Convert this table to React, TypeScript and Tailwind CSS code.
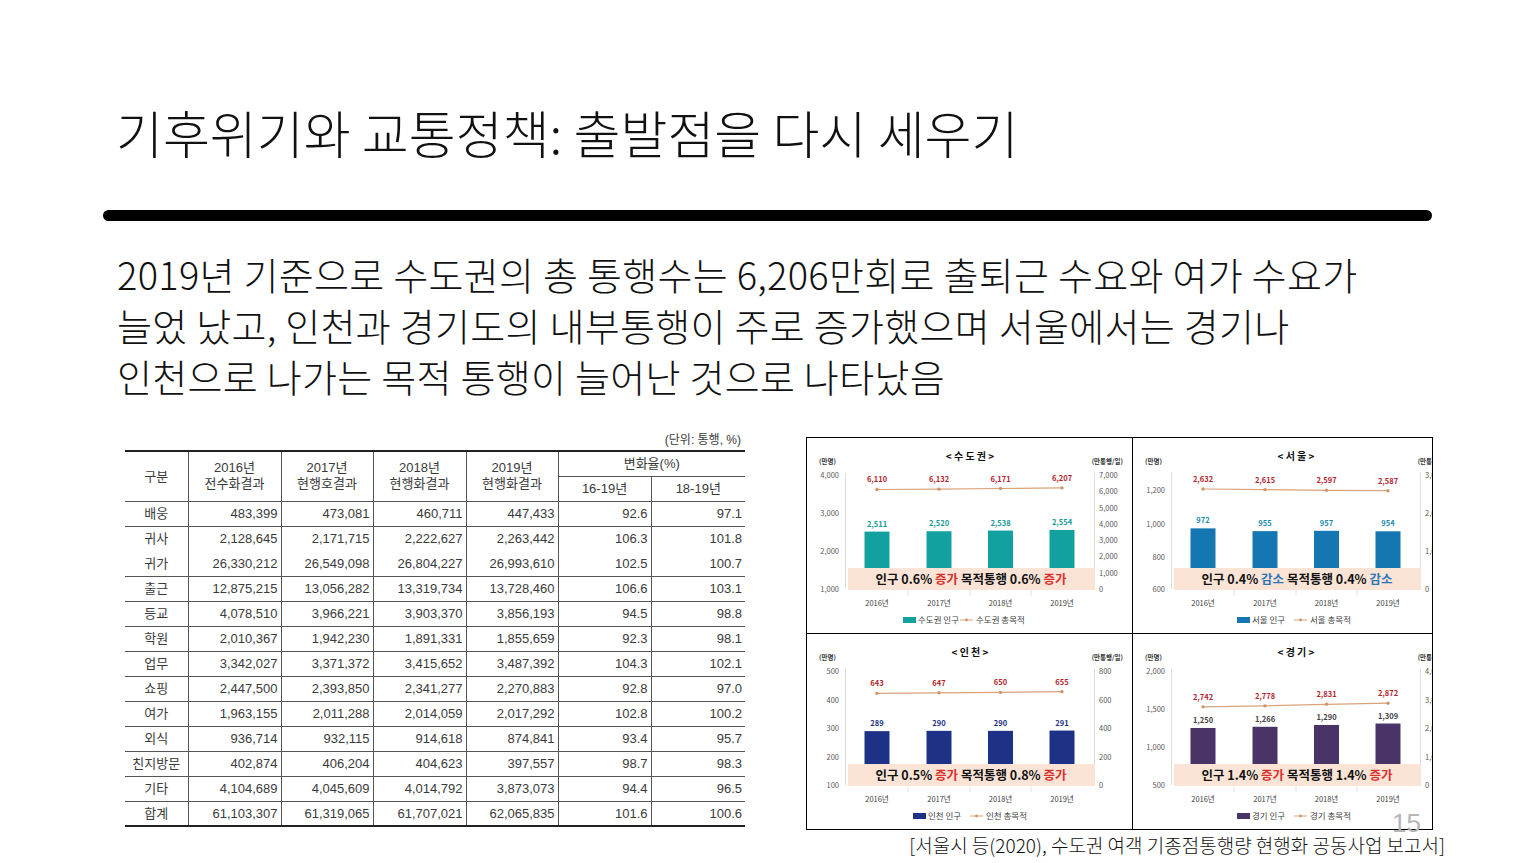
import React from 'react';

const SANS = '"Noto Sans CJK KR", "Noto Sans", sans-serif';
const CX = [70, 132, 193.5, 255];
const YEARS = ['2016년', '2017년', '2018년', '2019년'];

type Tick = [string, number];

interface PanelProps {
  title: string;
  name: string;
  leftTicks: Tick[];
  rightTicks: Tick[];
  bars: number[];
  barY: (v: number) => number;
  line: number[];
  lineY: (v: number) => number;
  barColor: string;
  barLabelColor: string;
  pop: string;
  trips: string;
  word: string;
  wordColor: string;
  legendX: number;
}

const fmt = (n: number) => n.toLocaleString('en-US');

function ChartPanel(p: PanelProps) {
  const pts = p.line.map((v, i) => `${CX[i]},${p.lineY(v)}`).join(' ');
  return (
    <svg width={326} height={197} viewBox="0 0 326 197" className="block" fontFamily={SANS}>
      <text x={163} y={22} textAnchor="middle" fontSize={10} fontWeight={700} fill="#111">
        {p.title}
      </text>
      <text x={12} y={26} fontSize={6.5} fontWeight={700} fill="#333">
        (만명)
      </text>
      <text x={316} y={26} textAnchor="end" fontSize={6.5} fontWeight={700} fill="#333">
        (만통행/일)
      </text>

      <line x1={38.5} y1={35} x2={38.5} y2={151} stroke="#dcdcdc" />
      <line x1={287.5} y1={35} x2={287.5} y2={151} stroke="#dcdcdc" />
      {[101, 163, 224].map((x) =>
        <line key={x} x1={x} y1={152} x2={x} y2={158} stroke="#e2e2e2" />
      )}

      {p.leftTicks.map(([t, y]) =>
        <text key={t} x={32} y={y + 3} textAnchor="end" fontSize={7.5} fill="#595959">
          {t}
        </text>
      )}
      {p.rightTicks.map(([t, y]) =>
        <text key={t} x={292} y={y + 3} fontSize={7.5} fill="#595959">
          {t}
        </text>
      )}

      {p.bars.map((v, i) => {
        const y = p.barY(v);
        return (
          <g key={i}>
            <rect x={CX[i] - 12.5} y={y} width={25} height={151 - y} fill={p.barColor} />
            <text x={CX[i]} y={y - 5} textAnchor="middle" fontSize={7.5} fontWeight={700} fill={p.barLabelColor}>
              {fmt(v)}
            </text>
          </g>);

      })}

      <polyline points={pts} fill="none" stroke="#d9a27a" strokeWidth={1.2} />
      {p.line.map((v, i) =>
        <g key={i}>
          <circle cx={CX[i]} cy={p.lineY(v)} r={1.7} fill="#cf9468" />
          <text x={CX[i]} y={p.lineY(v) - 7} textAnchor="middle" fontSize={7.5} fontWeight={700} fill="#b3262e">
            {fmt(v)}
          </text>
        </g>
      )}

      <rect x={41} y={130} width={247} height={22} fill="#fbe4d6" />
      <text x={164} y={145.5} textAnchor="middle" fontSize={12.5} fontWeight={700} fill="#111">
        <tspan>인구 {p.pop} </tspan>
        <tspan fill={p.wordColor}>{p.word}</tspan>
        <tspan> 목적통행 {p.trips} </tspan>
        <tspan fill={p.wordColor}>{p.word}</tspan>
      </text>

      {YEARS.map((y, i) =>
        <text key={y} x={CX[i]} y={168} textAnchor="middle" fontSize={7.5} fill="#404040">
          {y}
        </text>
      )}

      <rect x={p.legendX} y={179} width={13} height={6} fill={p.barColor} />
      <text x={p.legendX + 15} y={185} fontSize={8.5} fill="#404040">
        {p.name} 인구
      </text>
      <line x1={p.legendX + 57} y1={182} x2={p.legendX + 70} y2={182} stroke="#d9a27a" strokeWidth={1} />
      <circle cx={p.legendX + 63.5} cy={182} r={1.4} fill="#cf9468" />
      <text x={p.legendX + 73} y={185} fontSize={8.5} fill="#404040">
        {p.name} 총목적
      </text>
    </svg>);

}

const evenTicks = (labels: string[]): Tick[] =>
labels.map((t, i) => [t, 37 + i * 114 / (labels.length - 1)]);

const PANELS: PanelProps[] = [
{
  title: '< 수 도 권 >',
  name: '수도권',
  leftTicks: evenTicks(['4,000', '3,000', '2,000', '1,000']),
  rightTicks: evenTicks(['7,000', '6,000', '5,000', '4,000', '3,000', '2,000', '1,000', '0']),
  bars: [2511, 2520, 2538, 2554],
  barY: (v) => 151 - (v - 1000) * 0.038,
  line: [6110, 6132, 6171, 6207],
  lineY: (v) => 151 - v * 114 / 7000,
  barColor: '#13a19f',
  barLabelColor: '#17999a',
  pop: '0.6%',
  trips: '0.6%',
  word: '증가',
  wordColor: '#dc2f2c',
  legendX: 96
},
{
  title: '< 서 울 >',
  name: '서울',
  leftTicks: [['1,200', 52], ['1,000', 86], ['800', 119], ['600', 151]],
  rightTicks: evenTicks(['3,000', '2,000', '1,000', '0']),
  bars: [972, 955, 957, 954],
  barY: (v) => 151 - (v - 600) * 0.163,
  line: [2632, 2615, 2597, 2587],
  lineY: (v) => 151 - v * 0.038,
  barColor: '#1577b2',
  barLabelColor: '#1b8bab',
  pop: '0.4%',
  trips: '0.4%',
  word: '감소',
  wordColor: '#2e75b6',
  legendX: 104
},
{
  title: '< 인 천 >',
  name: '인천',
  leftTicks: evenTicks(['500', '400', '300', '200', '100']),
  rightTicks: evenTicks(['800', '600', '400', '200', '0']),
  bars: [289, 290, 290, 291],
  barY: (v) => 151 - (v - 100) * 0.285,
  line: [643, 647, 650, 655],
  lineY: (v) => 151 - v * 114 / 800,
  barColor: '#1d3286',
  barLabelColor: '#1d3286',
  pop: '0.5%',
  trips: '0.8%',
  word: '증가',
  wordColor: '#dc2f2c',
  legendX: 106
},
{
  title: '< 경 기 >',
  name: '경기',
  leftTicks: evenTicks(['2,000', '1,500', '1,000', '500']),
  rightTicks: evenTicks(['4,000', '3,000', '2,000', '1,000', '0']),
  bars: [1250, 1266, 1290, 1309],
  barY: (v) => 151 - (v - 500) * 0.076,
  line: [2742, 2778, 2831, 2872],
  lineY: (v) => 151 - v * 114 / 4000,
  barColor: '#4a3467',
  barLabelColor: '#444444',
  pop: '1.4%',
  trips: '1.4%',
  word: '증가',
  wordColor: '#dc2f2c',
  legendX: 104
}];


const ROWS: string[][] = [
['배웅', '483,399', '473,081', '460,711', '447,433', '92.6', '97.1'],
['귀사', '2,128,645', '2,171,715', '2,222,627', '2,263,442', '106.3', '101.8'],
['귀가', '26,330,212', '26,549,098', '26,804,227', '26,993,610', '102.5', '100.7'],
['출근', '12,875,215', '13,056,282', '13,319,734', '13,728,460', '106.6', '103.1'],
['등교', '4,078,510', '3,966,221', '3,903,370', '3,856,193', '94.5', '98.8'],
['학원', '2,010,367', '1,942,230', '1,891,331', '1,855,659', '92.3', '98.1'],
['업무', '3,342,027', '3,371,372', '3,415,652', '3,487,392', '104.3', '102.1'],
['쇼핑', '2,447,500', '2,393,850', '2,341,277', '2,270,883', '92.8', '97.0'],
['여가', '1,963,155', '2,011,288', '2,014,059', '2,017,292', '102.8', '100.2'],
['외식', '936,714', '932,115', '914,618', '874,841', '93.4', '95.7'],
['친지방문', '402,874', '406,204', '404,623', '397,557', '98.7', '98.3'],
['기타', '4,104,689', '4,045,609', '4,014,792', '3,873,073', '94.4', '96.5'],
['합계', '61,103,307', '61,319,065', '61,707,021', '62,065,835', '101.6', '100.6']];


const HEAD = [
['2016년', '전수화결과'],
['2017년', '현행호결과'],
['2018년', '현행화결과'],
['2019년', '현행화결과']];


function TripTable() {
  return (
    <div className="w-[620px] font-['Liberation_Sans','Noto_Sans_CJK_KR',sans-serif] text-[#3a3a3a]">
      <div className="h-[17px] text-right text-[12px] leading-[14px] pr-[4px]">(단위: 통행, %)</div>
      <table className="w-full border-collapse table-fixed text-[13px]">
        <colgroup>
          <col className="w-[63px]" />
          <col className="w-[93px]" />
          <col className="w-[92px]" />
          <col className="w-[93px]" />
          <col className="w-[92px]" />
          <col className="w-[93px]" />
          <col className="w-[94px]" />
        </colgroup>
        <thead>
          <tr className="h-[25px] border-t-2 border-[#222]">
            <th rowSpan={2} className="font-normal border-r border-[#555] border-b">구분</th>
            {HEAD.map(([a, b]) =>
            <th key={a} rowSpan={2} className="font-normal leading-[16px] border-r border-b border-[#555]">
                {a}
                <br />
                {b}
              </th>
            )}
            <th colSpan={2} className="font-normal border-b border-[#555]">변화율(%)</th>
          </tr>
          <tr className="h-[25px]">
            <th className="font-normal border-r border-b border-[#555]">16-19년</th>
            <th className="font-normal border-b border-[#555]">18-19년</th>
          </tr>
        </thead>
        <tbody>
          {ROWS.map((r, i) =>
          <tr
            key={r[0]}
            className={`h-[25px] ${i === 1 ? '' : 'border-b'} ${i === ROWS.length - 1 ? 'border-b-2 border-[#222]' : 'border-[#555]'}`}>

              {r.map((c, j) =>
            <td
              key={j}
              className={`p-0 ${j === 0 ? 'text-center' : 'text-right pr-[3px]'} ${j < 6 ? 'border-r border-[#555]' : ''}`}>

                  {c}
                </td>
            )}
            </tr>
          )}
        </tbody>
      </table>
    </div>);

}

export default function App() {
  return (
    <div className="relative w-[1534px] h-[863px] overflow-hidden bg-white text-[#111] font-['Noto_Sans_CJK_KR','Noto_Sans',sans-serif]">
      <h1 className="pl-[116px] pt-[101px] text-[51px] leading-[62px] font-light">
        기후위기와 교통정책: 출발점을 다시 세우기
      </h1>

      <div className="ml-[103px] mt-[47px] h-[11px] w-[1329px] rounded-full bg-black" />

      <p className="mt-[27px] pl-[117px] text-[38px] leading-[51px] font-light tracking-[0.3px]">
        2019년 기준으로 수도권의 총 통행수는 6,206만회로 출퇴근 수요와 여가 수요가
        <br />
        늘었 났고, 인천과 경기도의 내부통행이 주로 증가했으며 서울에서는 경기나
        <br />
        인천으로 나가는 목적 통행이 늘어난 것으로 나타났음
      </p>

      <div className="mt-[32px] flex items-start">
        <div className="ml-[125px]">
          <TripTable />
        </div>
        <div className="ml-[61px] mt-[4px] w-[627px] h-[393px] border border-black grid grid-cols-[325px_300px] grid-rows-[195px_196px]">
          {PANELS.map((p, i) =>
          <div
            key={p.name}
            className={`overflow-hidden ${i % 2 === 1 ? 'border-l border-black' : ''} ${i >= 2 ? 'border-t border-black' : ''}`}>

              <ChartPanel {...p} />
            </div>
          )}
        </div>
      </div>

      <div className="mt-[3px] pr-[89px] text-right text-[19px] leading-[24px] font-light">
        [서울시 등(2020), 수도권 여객 기종점통행량 현행화 공동사업 보고서]
      </div>

      <div className="absolute left-[1392px] top-[808px] text-[26px] leading-[30px] font-['Liberation_Sans',sans-serif] font-light text-[#b5b5b5]">
        15
      </div>
    </div>);

}
